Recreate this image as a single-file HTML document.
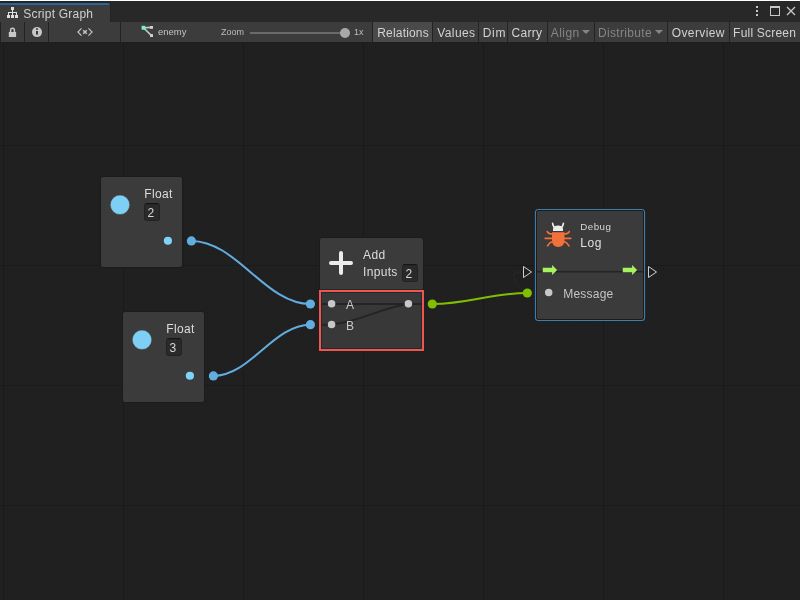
<!DOCTYPE html>
<html><head><meta charset="utf-8"><style>
html,body{margin:0;padding:0;width:800px;height:600px;overflow:hidden;background:#202020}
svg{display:block;font-family:"Liberation Sans", sans-serif;will-change:transform}
</style></head><body>
<svg width="800" height="600" viewBox="0 0 800 600"><rect x="0" y="0" width="800" height="600" fill="#202020"/><g shape-rendering="crispEdges"><rect x="15" y="42" width="1" height="558" fill="#1f1f1f"/><rect x="27" y="42" width="1" height="558" fill="#1f1f1f"/><rect x="39" y="42" width="1" height="558" fill="#1f1f1f"/><rect x="51" y="42" width="1" height="558" fill="#1f1f1f"/><rect x="63" y="42" width="1" height="558" fill="#1f1f1f"/><rect x="75" y="42" width="1" height="558" fill="#1f1f1f"/><rect x="87" y="42" width="1" height="558" fill="#1f1f1f"/><rect x="99" y="42" width="1" height="558" fill="#1f1f1f"/><rect x="111" y="42" width="1" height="558" fill="#1f1f1f"/><rect x="135" y="42" width="1" height="558" fill="#1f1f1f"/><rect x="147" y="42" width="1" height="558" fill="#1f1f1f"/><rect x="159" y="42" width="1" height="558" fill="#1f1f1f"/><rect x="171" y="42" width="1" height="558" fill="#1f1f1f"/><rect x="183" y="42" width="1" height="558" fill="#1f1f1f"/><rect x="195" y="42" width="1" height="558" fill="#1f1f1f"/><rect x="207" y="42" width="1" height="558" fill="#1f1f1f"/><rect x="219" y="42" width="1" height="558" fill="#1f1f1f"/><rect x="231" y="42" width="1" height="558" fill="#1f1f1f"/><rect x="255" y="42" width="1" height="558" fill="#1f1f1f"/><rect x="267" y="42" width="1" height="558" fill="#1f1f1f"/><rect x="279" y="42" width="1" height="558" fill="#1f1f1f"/><rect x="291" y="42" width="1" height="558" fill="#1f1f1f"/><rect x="303" y="42" width="1" height="558" fill="#1f1f1f"/><rect x="315" y="42" width="1" height="558" fill="#1f1f1f"/><rect x="327" y="42" width="1" height="558" fill="#1f1f1f"/><rect x="339" y="42" width="1" height="558" fill="#1f1f1f"/><rect x="351" y="42" width="1" height="558" fill="#1f1f1f"/><rect x="375" y="42" width="1" height="558" fill="#1f1f1f"/><rect x="387" y="42" width="1" height="558" fill="#1f1f1f"/><rect x="399" y="42" width="1" height="558" fill="#1f1f1f"/><rect x="411" y="42" width="1" height="558" fill="#1f1f1f"/><rect x="423" y="42" width="1" height="558" fill="#1f1f1f"/><rect x="435" y="42" width="1" height="558" fill="#1f1f1f"/><rect x="447" y="42" width="1" height="558" fill="#1f1f1f"/><rect x="459" y="42" width="1" height="558" fill="#1f1f1f"/><rect x="471" y="42" width="1" height="558" fill="#1f1f1f"/><rect x="495" y="42" width="1" height="558" fill="#1f1f1f"/><rect x="507" y="42" width="1" height="558" fill="#1f1f1f"/><rect x="519" y="42" width="1" height="558" fill="#1f1f1f"/><rect x="531" y="42" width="1" height="558" fill="#1f1f1f"/><rect x="543" y="42" width="1" height="558" fill="#1f1f1f"/><rect x="555" y="42" width="1" height="558" fill="#1f1f1f"/><rect x="567" y="42" width="1" height="558" fill="#1f1f1f"/><rect x="579" y="42" width="1" height="558" fill="#1f1f1f"/><rect x="591" y="42" width="1" height="558" fill="#1f1f1f"/><rect x="615" y="42" width="1" height="558" fill="#1f1f1f"/><rect x="627" y="42" width="1" height="558" fill="#1f1f1f"/><rect x="639" y="42" width="1" height="558" fill="#1f1f1f"/><rect x="651" y="42" width="1" height="558" fill="#1f1f1f"/><rect x="663" y="42" width="1" height="558" fill="#1f1f1f"/><rect x="675" y="42" width="1" height="558" fill="#1f1f1f"/><rect x="687" y="42" width="1" height="558" fill="#1f1f1f"/><rect x="699" y="42" width="1" height="558" fill="#1f1f1f"/><rect x="711" y="42" width="1" height="558" fill="#1f1f1f"/><rect x="735" y="42" width="1" height="558" fill="#1f1f1f"/><rect x="747" y="42" width="1" height="558" fill="#1f1f1f"/><rect x="759" y="42" width="1" height="558" fill="#1f1f1f"/><rect x="771" y="42" width="1" height="558" fill="#1f1f1f"/><rect x="783" y="42" width="1" height="558" fill="#1f1f1f"/><rect x="795" y="42" width="1" height="558" fill="#1f1f1f"/><rect x="0" y="49" width="800" height="1" fill="#1f1f1f"/><rect x="0" y="61" width="800" height="1" fill="#1f1f1f"/><rect x="0" y="73" width="800" height="1" fill="#1f1f1f"/><rect x="0" y="85" width="800" height="1" fill="#1f1f1f"/><rect x="0" y="97" width="800" height="1" fill="#1f1f1f"/><rect x="0" y="109" width="800" height="1" fill="#1f1f1f"/><rect x="0" y="121" width="800" height="1" fill="#1f1f1f"/><rect x="0" y="133" width="800" height="1" fill="#1f1f1f"/><rect x="0" y="157" width="800" height="1" fill="#1f1f1f"/><rect x="0" y="169" width="800" height="1" fill="#1f1f1f"/><rect x="0" y="181" width="800" height="1" fill="#1f1f1f"/><rect x="0" y="193" width="800" height="1" fill="#1f1f1f"/><rect x="0" y="205" width="800" height="1" fill="#1f1f1f"/><rect x="0" y="217" width="800" height="1" fill="#1f1f1f"/><rect x="0" y="229" width="800" height="1" fill="#1f1f1f"/><rect x="0" y="241" width="800" height="1" fill="#1f1f1f"/><rect x="0" y="253" width="800" height="1" fill="#1f1f1f"/><rect x="0" y="277" width="800" height="1" fill="#1f1f1f"/><rect x="0" y="289" width="800" height="1" fill="#1f1f1f"/><rect x="0" y="301" width="800" height="1" fill="#1f1f1f"/><rect x="0" y="313" width="800" height="1" fill="#1f1f1f"/><rect x="0" y="325" width="800" height="1" fill="#1f1f1f"/><rect x="0" y="337" width="800" height="1" fill="#1f1f1f"/><rect x="0" y="349" width="800" height="1" fill="#1f1f1f"/><rect x="0" y="361" width="800" height="1" fill="#1f1f1f"/><rect x="0" y="373" width="800" height="1" fill="#1f1f1f"/><rect x="0" y="397" width="800" height="1" fill="#1f1f1f"/><rect x="0" y="409" width="800" height="1" fill="#1f1f1f"/><rect x="0" y="421" width="800" height="1" fill="#1f1f1f"/><rect x="0" y="433" width="800" height="1" fill="#1f1f1f"/><rect x="0" y="445" width="800" height="1" fill="#1f1f1f"/><rect x="0" y="457" width="800" height="1" fill="#1f1f1f"/><rect x="0" y="469" width="800" height="1" fill="#1f1f1f"/><rect x="0" y="481" width="800" height="1" fill="#1f1f1f"/><rect x="0" y="493" width="800" height="1" fill="#1f1f1f"/><rect x="0" y="517" width="800" height="1" fill="#1f1f1f"/><rect x="0" y="529" width="800" height="1" fill="#1f1f1f"/><rect x="0" y="541" width="800" height="1" fill="#1f1f1f"/><rect x="0" y="553" width="800" height="1" fill="#1f1f1f"/><rect x="0" y="565" width="800" height="1" fill="#1f1f1f"/><rect x="0" y="577" width="800" height="1" fill="#1f1f1f"/><rect x="0" y="589" width="800" height="1" fill="#1f1f1f"/><rect x="3" y="42" width="1" height="558" fill="#1a1a1a"/><rect x="123" y="42" width="1" height="558" fill="#1a1a1a"/><rect x="243" y="42" width="1" height="558" fill="#1a1a1a"/><rect x="363" y="42" width="1" height="558" fill="#1a1a1a"/><rect x="483" y="42" width="1" height="558" fill="#1a1a1a"/><rect x="603" y="42" width="1" height="558" fill="#1a1a1a"/><rect x="723" y="42" width="1" height="558" fill="#1a1a1a"/><rect x="0" y="145" width="800" height="1" fill="#1a1a1a"/><rect x="0" y="265" width="800" height="1" fill="#1a1a1a"/><rect x="0" y="385" width="800" height="1" fill="#1a1a1a"/><rect x="0" y="505" width="800" height="1" fill="#1a1a1a"/></g><g shape-rendering="crispEdges"><rect x="0" y="0" width="800" height="1" fill="#ffffff"/><rect x="0" y="1" width="800" height="1" fill="#262626"/><rect x="0" y="2" width="800" height="20" fill="#282828"/><rect x="0" y="2" width="110" height="20" fill="#3c3c3c"/><rect x="0" y="2" width="110" height="1" fill="#252525"/><rect x="110" y="2" width="1" height="20" fill="#232323"/></g><path d="M0 3 H107.5 A2 2 0 0 1 109.5 5 V5 H0 Z" fill="#2c6598"/><g fill="#dedede" shape-rendering="crispEdges"><rect x="11" y="7" width="3" height="3"/><rect x="12" y="10" width="1" height="3"/><rect x="8" y="12" width="9" height="1"/><rect x="8" y="12" width="1" height="3"/><rect x="12" y="12" width="1" height="3"/><rect x="16" y="12" width="1" height="3"/><rect x="7" y="15" width="3" height="3"/><rect x="11" y="15" width="3" height="3"/><rect x="15" y="15" width="3" height="3"/></g><text x="23.2" y="17.5" font-size="12" fill="#d0d0d0" text-anchor="start" letter-spacing="0.22">Script Graph</text><g fill="#c8c8c8"><rect x="756" y="6" width="2" height="2"/><rect x="756" y="10" width="2" height="2"/><rect x="756" y="14" width="2" height="2"/></g><g shape-rendering="crispEdges" fill="#c8c8c8"><rect x="770" y="6" width="10" height="2"/><rect x="770" y="6" width="1" height="10"/><rect x="779" y="6" width="1" height="10"/><rect x="770" y="15" width="10" height="1"/></g><path d="M787 7 L795 15 M795 7 L787 15" stroke="#c8c8c8" stroke-width="1.3"/><g shape-rendering="crispEdges"><rect x="0" y="22" width="800" height="20" fill="#3c3c3c"/><rect x="373" y="22" width="59" height="20" fill="#4a4a4a"/><rect x="0" y="22" width="1" height="20" fill="#232323"/><rect x="24" y="22" width="1" height="20" fill="#232323"/><rect x="48" y="22" width="1" height="20" fill="#232323"/><rect x="120" y="22" width="1" height="20" fill="#232323"/><rect x="372" y="22" width="1" height="20" fill="#232323"/><rect x="432" y="22" width="1" height="20" fill="#232323"/><rect x="478" y="22" width="1" height="20" fill="#232323"/><rect x="507" y="22" width="1" height="20" fill="#232323"/><rect x="547" y="22" width="1" height="20" fill="#232323"/><rect x="594" y="22" width="1" height="20" fill="#232323"/><rect x="667" y="22" width="1" height="20" fill="#232323"/><rect x="729" y="22" width="1" height="20" fill="#232323"/><rect x="0" y="42" width="800" height="1" fill="#1e1e1e"/></g><path d="M10.6 32.5 V30.2 A1.9 1.9 0 0 1 14.4 30.2 V32.5" fill="none" stroke="#c8c8c8" stroke-width="1.5"/><rect x="8.8" y="32" width="7.3" height="5" fill="#c8c8c8"/><circle cx="37" cy="32.1" r="5" fill="#c8c8c8"/><rect x="36" y="28.3" width="2" height="1.5" fill="#3c3c3c"/><rect x="36" y="31" width="2" height="3.6" fill="#3c3c3c"/><path d="M81.5 28.3 L77.9 32 L81.5 35.7 M88.5 28.3 L92.1 32 L88.5 35.7" stroke="#c8c8c8" stroke-width="1.1" fill="none"/><path d="M83.2 30.2 L86.8 33.8 M86.8 30.2 L83.2 33.8" stroke="#c8c8c8" stroke-width="1.4" fill="none"/><defs><linearGradient id="eg" x1="0" y1="0" x2="1" y2="0.3"><stop offset="0" stop-color="#7ff0d4"/><stop offset="0.6" stop-color="#c8c8c8"/></linearGradient></defs><path d="M143.5 27.8 L151.5 27.4 M143.5 27.8 L151.5 35.6" stroke="url(#eg)" stroke-width="1.6"/><rect x="141.6" y="25.8" width="3.6" height="3.9" fill="#7ff0d4"/><rect x="150" y="26" width="3" height="2.8" fill="#cfcfcf"/><rect x="150" y="34.1" width="3" height="2.9" fill="#cfcfcf"/><text x="158" y="35" font-size="9.5" fill="#c4c4c4" text-anchor="start" >enemy</text><text x="221" y="34.75" font-size="9" fill="#bdbdbd" text-anchor="start" >Zoom</text><rect x="250" y="32" width="92" height="2" fill="#6a6a6a"/><circle cx="345" cy="33" r="5" fill="#a8a8a8"/><text x="354" y="34.75" font-size="9" fill="#bdbdbd" text-anchor="start" >1x</text><text x="377.2" y="36.9" font-size="12" fill="#d2d2d2" text-anchor="start" letter-spacing="0.19">Relations</text><text x="437.2" y="36.9" font-size="12" fill="#d2d2d2" text-anchor="start" letter-spacing="0.42">Values</text><text x="482.8" y="36.9" font-size="12" fill="#d2d2d2" text-anchor="start" letter-spacing="0.65">Dim</text><text x="511.6" y="36.9" font-size="12" fill="#d2d2d2" text-anchor="start" letter-spacing="0.25">Carry</text><text x="550.8" y="36.9" font-size="12" fill="#858585" text-anchor="start" letter-spacing="0.45">Align</text><text x="597.9" y="36.9" font-size="12" fill="#858585" text-anchor="start" letter-spacing="0.34">Distribute</text><text x="671.7" y="36.9" font-size="12" fill="#d2d2d2" text-anchor="start" letter-spacing="0.4">Overview</text><text x="733.1" y="36.9" font-size="12" fill="#d2d2d2" text-anchor="start" letter-spacing="0.21">Full Screen</text><path d="M582 30 H590 L586 34 Z" fill="#858585"/><path d="M655 30 H663 L659 34 Z" fill="#858585"/><rect x="100.5" y="176.5" width="82" height="91" rx="2.5" fill="#3b3b3b" stroke="#1b1b1b" stroke-width="1"/><circle cx="120" cy="204.8" r="9.75" fill="#7ecff6" stroke="#4a4038" stroke-width="0.5"/><text x="144.3" y="198" font-size="12" fill="#dcdcdc" text-anchor="start" letter-spacing="0.35">Float</text><rect x="144.5" y="203.5" width="15" height="17" rx="2" fill="#2a2a2a" stroke="#222222" stroke-width="1"/><rect x="145.5" y="203" width="13" height="1.2" fill="#161616"/><text x="147.5" y="216.8" font-size="12" fill="#d6d6d6" text-anchor="start" >2</text><circle cx="167.9" cy="240.75" r="4.1" fill="#7fd3fa"/><rect x="122.5" y="311.5" width="82" height="91" rx="2.5" fill="#3b3b3b" stroke="#1b1b1b" stroke-width="1"/><circle cx="142" cy="339.8" r="9.75" fill="#7ecff6" stroke="#4a4038" stroke-width="0.5"/><text x="166.3" y="333" font-size="12" fill="#dcdcdc" text-anchor="start" letter-spacing="0.35">Float</text><rect x="166.5" y="338.5" width="15" height="17" rx="2" fill="#2a2a2a" stroke="#222222" stroke-width="1"/><rect x="167.5" y="338" width="13" height="1.2" fill="#161616"/><text x="169.5" y="351.8" font-size="12" fill="#d6d6d6" text-anchor="start" >3</text><circle cx="189.9" cy="375.75" r="4.1" fill="#7fd3fa"/><rect x="319.5" y="237.5" width="104" height="113" rx="2.5" fill="#3b3b3b" stroke="#1b1b1b" stroke-width="1"/><path d="M331 263 H351 M341 253 V273" stroke="#ececec" stroke-width="4" stroke-linecap="round"/><text x="363" y="259" font-size="12" fill="#dcdcdc" text-anchor="start" letter-spacing="0.45">Add</text><text x="363" y="276" font-size="12" fill="#dcdcdc" text-anchor="start" letter-spacing="0.32">Inputs</text><rect x="402.5" y="264.5" width="15" height="17" rx="2" fill="#2a2a2a" stroke="#222222" stroke-width="1"/><rect x="403.5" y="264" width="13" height="1.2" fill="#161616"/><text x="405.5" y="277.8" font-size="12" fill="#d6d6d6" text-anchor="start" >2</text><rect x="320" y="289" width="103" height="1" fill="#232828" shape-rendering="crispEdges"/><rect x="321" y="292" width="101" height="57" fill="#383838" shape-rendering="crispEdges"/><path d="M321 304 H422" stroke="#242424" stroke-width="2" fill="none"/><path d="M321 325 L331.6 324.5 C360 322 380 308 408.4 303.7" stroke="#242424" stroke-width="2" fill="none"/><circle cx="331.6" cy="303.7" r="3.75" fill="#c8c8c8"/><circle cx="331.6" cy="324.5" r="3.75" fill="#c8c8c8"/><circle cx="408.4" cy="303.7" r="3.75" fill="#c8c8c8"/><text x="346" y="308.7" font-size="12" fill="#c8c8c8" text-anchor="start" >A</text><text x="346" y="330" font-size="12" fill="#c8c8c8" text-anchor="start" >B</text><rect x="320" y="291" width="103" height="59" fill="none" stroke="#f05552" stroke-width="2" shape-rendering="crispEdges"/><rect x="321.5" y="292.5" width="100" height="56" fill="none" stroke="#1f2a2a" stroke-width="1" shape-rendering="crispEdges"/><rect x="535.5" y="209.5" width="109" height="111" rx="3" fill="none" stroke="#3c7fae" stroke-width="1.2"/><rect x="536.5" y="210.5" width="107" height="109" rx="2" fill="#3b3b3b" stroke="#1b1b1b" stroke-width="1"/><g><path d="M553 231 V228.6 Q554 225.6 558 225.6 Q562 225.6 563 228.6 V231 Z" fill="#ececec"/><path d="M552.6 223.4 Q553 226.8 555.6 228 M563.4 223.4 Q563 226.8 560.4 228" stroke="#ececec" stroke-width="1.6" fill="none" stroke-linecap="round"/><path d="M552 232.2 H564.5 V240 Q564.5 247 558.25 247 Q552 247 552 240 Z" fill="#f2703a"/><path d="M552.5 234 Q548.5 234 547.2 231.6 M564 234 Q568 234 569.3 231.6 M545.2 238.3 H552.5 M564 238.3 H570.8 M553 241.3 Q549.5 242.3 547.5 245.8 M563.5 241.3 Q567 242.3 569 245.8" stroke="#f2703a" stroke-width="1.7" fill="none" stroke-linecap="round"/></g><text x="580.3" y="230" font-size="9.75" fill="#d6d6d6" text-anchor="start" letter-spacing="0.45">Debug</text><text x="580.2" y="247" font-size="12" fill="#e0e0e0" text-anchor="start" letter-spacing="0.6">Log</text><rect x="537" y="270.9" width="106" height="1.6" fill="#242424"/><path d="M542.8 267.7 H552.1 V264.9 L557.1 270 L552.1 275.1 V272.3 H542.8 Z" fill="#a6f25f"/><path d="M622.8 267.7 H632.1 V264.9 L637.1 270 L632.1 275.1 V272.3 H622.8 Z" fill="#a6f25f"/><path d="M523.5 266.5 L531.5 272 L523.5 277.5 Z" fill="none" stroke="#cfcfcf" stroke-width="1"/><path d="M648.5 266.5 L656.5 272 L648.5 277.5 Z" fill="none" stroke="#cfcfcf" stroke-width="1"/><path d="M522.5 289.5 Q513.5 281 513.5 275 Q514.5 272 520.5 272" stroke="#282828" stroke-width="1" fill="none"/><circle cx="548.7" cy="292.5" r="3.75" fill="#c8c8c8"/><text x="563.2" y="298" font-size="12" fill="#c4c4c4" text-anchor="start" letter-spacing="0.22">Message</text><path d="M191.4 240.9 C236.62 240.9 265.18 304 310.4 304" stroke="#62ade0" stroke-width="2" fill="none"/><circle cx="191.4" cy="240.9" r="4.6" fill="#62ade0"/><circle cx="310.4" cy="304" r="4.6" fill="#62ade0"/><path d="M213.4 375.9 C250.26 375.9 273.53999999999996 324.7 310.4 324.7" stroke="#62ade0" stroke-width="2" fill="none"/><circle cx="213.4" cy="375.9" r="4.6" fill="#62ade0"/><circle cx="310.4" cy="324.7" r="4.6" fill="#62ade0"/><path d="M432.3 304 C468.4 304 491.2 293 527.3 293" stroke="#7fbf00" stroke-width="2" fill="none"/><circle cx="432.3" cy="304" r="4.6" fill="#7fbf00"/><circle cx="527.3" cy="293" r="4.6" fill="#7fbf00"/></svg>
</body></html>
